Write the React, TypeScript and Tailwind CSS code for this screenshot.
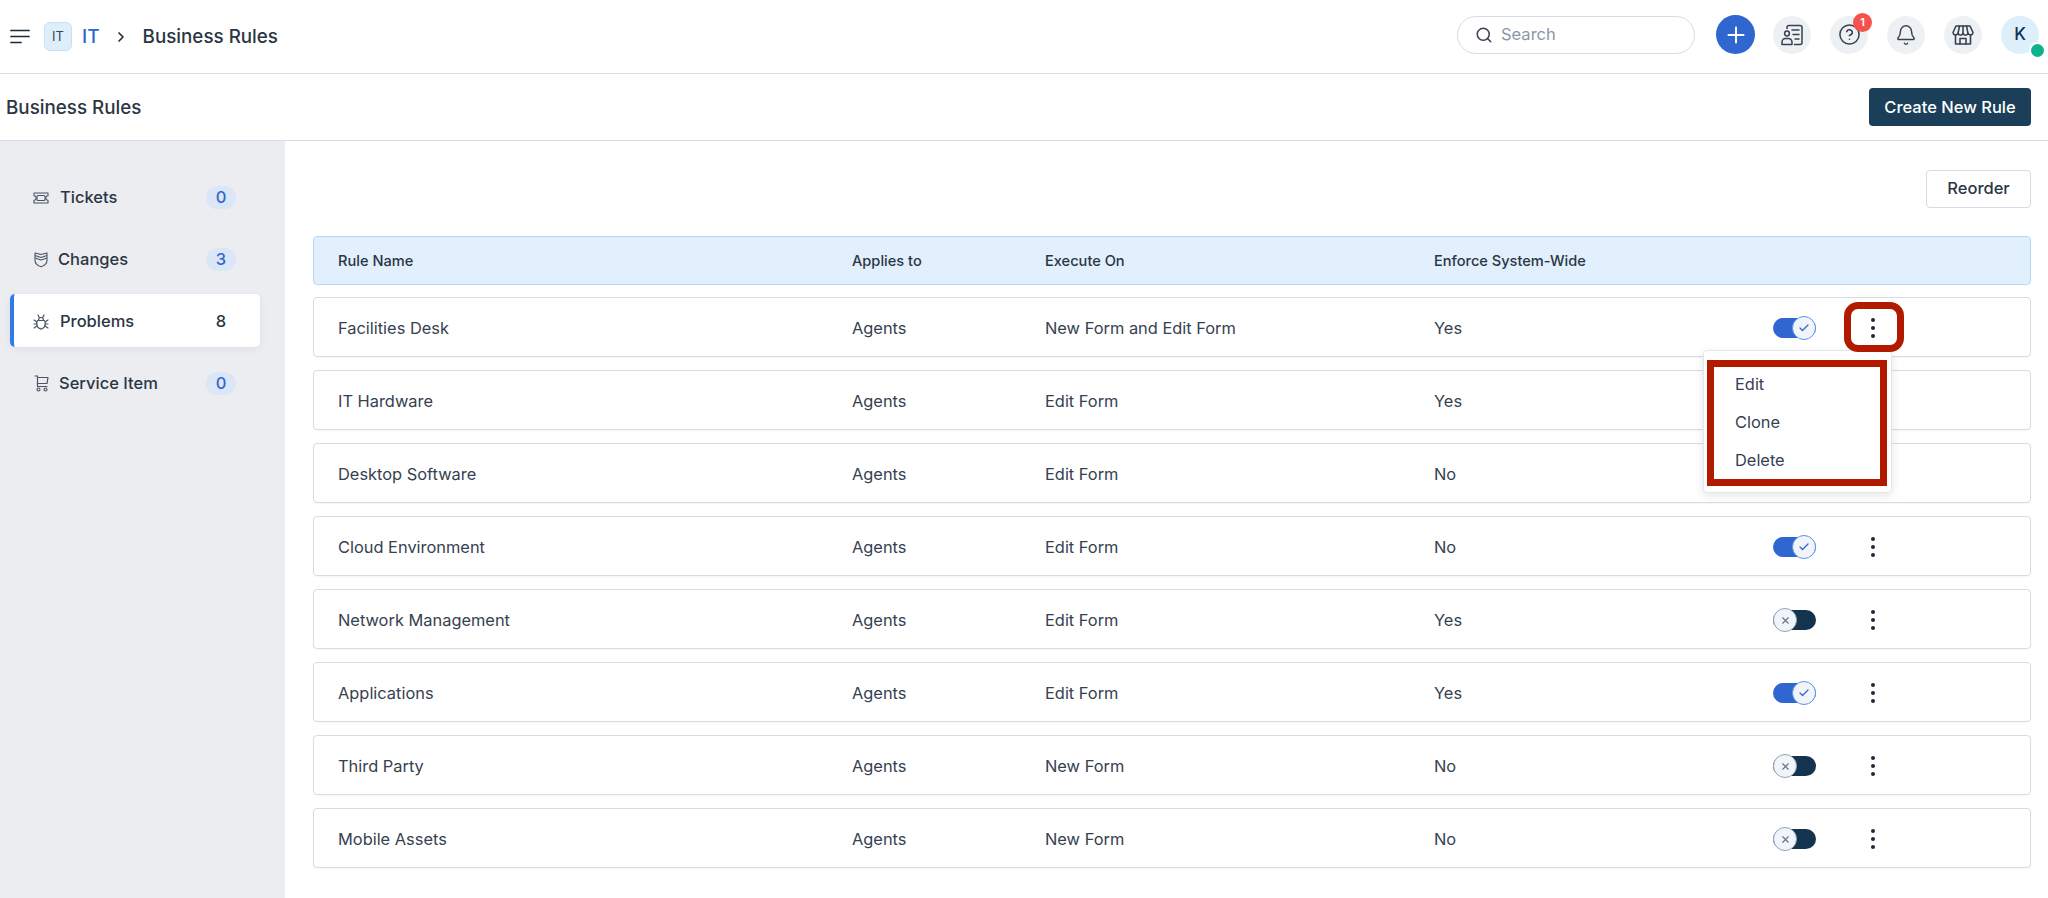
import React from 'react'
import { Bell, Check, ChevronRight, CircleHelp, Plus, Search, X } from 'lucide-react'

const rules = [
  { name: 'Facilities Desk', execute: 'New Form and Edit Form', enforce: 'Yes', on: true },
  { name: 'IT Hardware', execute: 'Edit Form', enforce: 'Yes', on: true },
  { name: 'Desktop Software', execute: 'Edit Form', enforce: 'No', on: true },
  { name: 'Cloud Environment', execute: 'Edit Form', enforce: 'No', on: true },
  { name: 'Network Management', execute: 'Edit Form', enforce: 'Yes', on: false },
  { name: 'Applications', execute: 'Edit Form', enforce: 'Yes', on: true },
  { name: 'Third Party', execute: 'New Form', enforce: 'No', on: false },
  { name: 'Mobile Assets', execute: 'New Form', enforce: 'No', on: false },
]

const columns = 'grid grid-cols-[514px_193px_389px_339px_98px_1fr] items-center pl-[24px] pt-[2px]'

const ContactIcon = () => (
  <svg width="24" height="24" viewBox="0 0 24 24" fill="none" stroke="#374151" strokeWidth="1.5" strokeLinecap="round" strokeLinejoin="round">
    <path d="M7 5.5V4.500A2 2 0 0 1 9 2.500h11a2 2 0 0 1 2 2v15a2 2 0 0 1-2 2h-5.500" />
    <circle cx="7" cy="10.500" r="2.400" />
    <path d="M2 21.500v-2.500a3.500 3.500 0 0 1 3.500-3.500h3a3.500 3.500 0 0 1 3.500 3.500v2.500z" />
    <path d="M12 7h7M13 11.500h6M15 16h4" />
  </svg>
)

const StoreIcon = () => (
  <svg width="24" height="24" viewBox="0 0 24 24" fill="none" stroke="#374151" strokeWidth="1.6" strokeLinecap="round" strokeLinejoin="round">
    <path d="M5 3h14l3 6.500a2.600 2.600 0 0 1-5 .8 2.600 2.600 0 0 1-5 0 2.600 2.600 0 0 1-5 0 2.600 2.600 0 0 1-5-.8z" />
    <path d="M8.500 3L7 10.300M15.500 3L17 10.300M12 3v7.300" />
    <path d="M4.500 12.500V21h15v-8.500" />
    <path d="M9 21v-5.500h6V21" />
  </svg>
)

const TicketIcon = () => (
  <svg width="16" height="12" viewBox="0 0 16 12" fill="none" stroke="#4b5563" strokeWidth="1.1" strokeLinejoin="round">
    <path d="M1 1h14v2.800a2.200 2.200 0 0 0 0 4.400V11H1V8.200a2.200 2.200 0 0 0 0-4.400z" />
    <rect x="4" y="3.500" width="8" height="5" rx="1" />
  </svg>
)

const ShieldIcon = () => (
  <svg width="14" height="16" viewBox="0 0 14 16" fill="none" stroke="#4b5563" strokeWidth="1.1" strokeLinejoin="round">
    <path d="M1 1l6 1.500L13 1v7.500c0 3-2.800 5.200-6 6.300-3.200-1.100-6-3.300-6-6.300z" />
    <path d="M1 3.500l6 2 6-2M1 6l6 2 6-2" />
  </svg>
)

const BugIcon = () => (
  <svg width="16" height="16" viewBox="0 0 16 16" fill="none" stroke="#4b5563" strokeWidth="1.2" strokeLinecap="round" strokeLinejoin="round">
    <path d="M4.500 6.500h7c.6 1 .8 2 .8 3 0 2.600-2 5-4.300 5.600-2.300-.6-4.300-3-4.300-5.600 0-1 .2-2 .8-3z" />
    <path d="M5.500 6.500c0-2 1-3 2.500-3s2.500 1 2.500 3M5 1l1.500 3M11 1L9.500 4" />
    <path d="M1 6l2.800 2M1 10h3M1 14l3-2M15 6l-2.800 2M15 10h-3M15 14l-3-2" />
  </svg>
)

const CartIcon = () => (
  <svg width="15" height="17" viewBox="0 0 15 17" fill="none" stroke="#4b5563" strokeWidth="1.2" strokeLinecap="round" strokeLinejoin="round">
    <path d="M1 1h2.500v10.500H13" />
    <path d="M3.500 2.500H14l-1 6H3.500" />
    <circle cx="4.500" cy="14.500" r="1.500" />
    <circle cx="11.500" cy="14.500" r="1.500" />
  </svg>
)

const RoundButton = ({ children }: { children: React.ReactNode }) => (
  <div className="flex h-[38px] w-[38px] items-center justify-center rounded-full bg-[#eef1f4]">{children}</div>
)

const Toggle = ({ on }: { on: boolean }) => (
  <div className={`flex h-[20px] w-[43px] items-center rounded-full ${on ? 'justify-end bg-[#2f66d0]' : 'justify-start bg-[#14334f]'}`}>
    <div className={`flex h-[24px] w-[24px] items-center justify-center rounded-full border bg-[#f1f5fa] ${on ? 'border-[#5b93ee]' : 'border-[#94a3b8]'}`}>
      {on ? <Check size={12} color="#2f66d0" strokeWidth={2.5} /> : <X size={11} color="#64748b" strokeWidth={2.5} />}
    </div>
  </div>
)

const Dots = () => (
  <div className="flex w-[4px] flex-col gap-[4px]">
    <span className="h-[4px] w-[4px] rounded-full bg-[#1f2a37]" />
    <span className="h-[4px] w-[4px] rounded-full bg-[#1f2a37]" />
    <span className="h-[4px] w-[4px] rounded-full bg-[#1f2a37]" />
  </div>
)

const SideItem = ({ icon, label, count, active, gap }: { icon: React.ReactNode; label: string; count: number; active?: boolean; gap: string }) => (
  <div className={`flex h-[53px] w-[250px] items-center justify-between rounded-[5px] border-l-[4px] pl-[19px] pt-[2px] ${active ? 'border-[#2f7ce8] bg-white shadow-[0_2px_8px_rgba(15,23,42,0.06)]' : 'border-transparent'}`}>
    <div className={`flex items-center ${gap}`}>
      <span className="flex w-[16px] items-center justify-center">{icon}</span>
      <span className="text-[16.5px] font-medium text-[#2b3644]">{label}</span>
    </div>
    {active ? (
      <span className="mr-[24px] flex h-[23px] w-[30px] items-center justify-center text-[16.5px] font-medium text-[#2b3644]">{count}</span>
    ) : (
      <span className="mr-[24px] flex h-[23px] w-[30px] items-center justify-center rounded-full bg-[#dbe6f6] text-[16.5px] font-medium text-[#2f66d0]">{count}</span>
    )}
  </div>
)

export default function App() {
  return (
    <div className="h-[898px] w-[2048px] overflow-hidden bg-white font-['Inter',sans-serif] text-[#2b3644]">
      <header className="flex h-[74px] items-center justify-between border-b border-[#d5dce4] pb-[4px] pl-[10px] pr-[9px]">
        <div className="flex items-center pt-[4px]">
          <svg width="20" height="15" viewBox="0 0 20 15" fill="none" stroke="#1f2a37" strokeWidth="1.7" strokeLinecap="round">
            <path d="M1 1.500h18M1 7.500h18M1 13.500h10" />
          </svg>
          <div className="ml-[14px] flex h-[29px] w-[28px] items-center justify-center rounded-[6px] border border-[#c5e0f7] bg-[#deeffc] text-[13px] text-[#3a4653]">IT</div>
          <span className="ml-[10px] pt-[2px] text-[19px] font-medium text-[#2f66d0]">IT</span>
          <ChevronRight size={16} strokeWidth={2.5} color="#1f2a37" className="ml-[13px]" />
          <span className="ml-[14px] pt-[2px] text-[18.8px] font-medium">Business Rules</span>
        </div>
        <div className="flex items-center">
          <div className="flex h-[38px] w-[238px] items-center gap-[8px] rounded-full border border-[#d5dce4] pl-[17px]">
            <Search size={18} color="#374151" />
            <span className="text-[16.5px] text-[#8a97a8]">Search</span>
          </div>
          <div className="ml-[21px] flex h-[39px] w-[39px] items-center justify-center rounded-full bg-[#2f66d0]">
            <Plus size={26} color="white" strokeWidth={1.8} />
          </div>
          <div className="ml-[18px] flex items-center gap-[19px]">
            <RoundButton><ContactIcon /></RoundButton>
            <div className="relative">
              <RoundButton><CircleHelp size={23} color="#374151" strokeWidth={1.6} /></RoundButton>
              <span className="absolute -top-[3px] left-[23px] flex h-[19px] w-[19px] items-center justify-center rounded-full bg-[#f4524d] text-[11px] font-semibold text-white">1</span>
            </div>
            <RoundButton><Bell size={22} color="#374151" strokeWidth={1.6} /></RoundButton>
            <RoundButton><StoreIcon /></RoundButton>
            <div className="relative">
              <div className="flex h-[38px] w-[38px] items-center justify-center rounded-full bg-[#deeffc] text-[17px] font-medium text-[#14334f]">K</div>
              <span className="absolute left-[28px] top-[26px] h-[17px] w-[17px] rounded-full border-2 border-white bg-[#10b28c]" />
            </div>
          </div>
        </div>
      </header>

      <div className="flex h-[67px] items-center justify-between border-b border-[#d5dce4] pl-[6px] pr-[17px]">
        <h1 className="pt-[2px] text-[18.8px] font-medium">Business Rules</h1>
        <button className="h-[38px] w-[162px] rounded-[4px] bg-[#1b3f59] text-[16.5px] font-medium text-white">Create New Rule</button>
      </div>

      <div className="flex h-[757px]">
        <aside className="flex w-[285px] shrink-0 flex-col gap-[9px] bg-[#ebedf1] pl-[10px] pt-[29px]">
          <SideItem gap="gap-[11px]" icon={<TicketIcon />} label="Tickets" count={0} />
          <SideItem gap="gap-[9px]" icon={<ShieldIcon />} label="Changes" count={3} />
          <SideItem gap="gap-[11px]" icon={<BugIcon />} label="Problems" count={8} active />
          <SideItem gap="gap-[10px]" icon={<CartIcon />} label="Service Item" count={0} />
        </aside>

        <main className="relative flex-1 pl-[28px] pr-[17px] pt-[29px]">
          <div className="flex justify-end">
            <button className="h-[38px] w-[105px] rounded-[4px] border border-[#d5dce4] pb-[2px] text-[16.5px] font-medium">Reorder</button>
          </div>
          <div className={`${columns} mt-[28px] h-[49px] rounded-[4px] border border-[#b5d6fb] bg-[#e2effd] text-[14.6px] font-medium`}>
            <span>Rule Name</span>
            <span>Applies to</span>
            <span>Execute On</span>
            <span>Enforce System-Wide</span>
          </div>
          <div className="mt-[12px] flex flex-col gap-[13px]">
            {rules.map((rule) => (
              <div key={rule.name} className={`${columns} h-[60px] rounded-[4px] border border-[#d5dce4] text-[16.4px] text-[#36414f] shadow-[0_1px_2px_rgba(15,23,42,0.04)]`}>
                <span>{rule.name}</span>
                <span>Agents</span>
                <span>{rule.execute}</span>
                <span>{rule.enforce}</span>
                <Toggle on={rule.on} />
                <Dots />
              </div>
            ))}
          </div>

          {/* dropdown + red callouts sit over the rows */}
          <div className="absolute left-[1418px] top-[209px] h-[143px] w-[189px] rounded-[4px] border border-[#e3e7ec] bg-white pl-[3px] pt-[9px] shadow-[0_3px_10px_rgba(15,23,42,0.10)]">
            <div className="flex h-[126px] w-[180px] flex-col justify-center border-[7px] border-[#b21a00] pb-[2px] pl-[21px] text-[16.4px] leading-[38px] text-[#36414f]">
              <span>Edit</span>
              <span>Clone</span>
              <span>Delete</span>
            </div>
          </div>
          <div className="absolute left-[1559px] top-[161px] h-[50px] w-[60px] rounded-[14px] border-[7px] border-[#b21a00]" />
        </main>
      </div>
    </div>
  )
}
